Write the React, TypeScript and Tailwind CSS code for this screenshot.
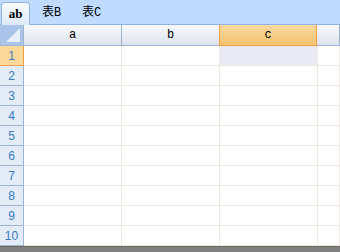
import React from 'react';

const COLS = ['a', 'b', 'c', ''];
const ROWS = [1, 2, 3, 4, 5, 6, 7, 8, 9, 10];
const SEL_ROW = 1;
const SEL_COL = 2;

export default function App() {
  return (
    <div className="w-[340px] h-[252px] overflow-hidden bg-white flex flex-col">
      {/* sheet tabs */}
      <div className="h-[25px] shrink-0 flex items-end bg-[#bfdbfd] border-b border-[#8fb3e3] pl-[1px]">
        <div className="[font-family:Liberation_Serif,serif] h-[23px] w-[29px] -mb-px flex items-center justify-center rounded-t-[4px] border border-b-0 border-[#8fb3e3] bg-gradient-to-b from-[#fbfdff] to-[#dde9f8] text-[13px] font-bold text-black">
          ab
        </div>
        <div className="[font-family:Liberation_Mono,Noto_Sans_CJK_SC,monospace] h-[23px] w-[41px] flex items-center justify-center text-[12px] text-black pl-[2px]">
          表B
        </div>
        <div className="[font-family:Liberation_Mono,Noto_Sans_CJK_SC,monospace] h-[23px] w-[41px] flex items-center justify-center text-[12px] text-black">
          表C
        </div>
      </div>

      {/* header row */}
      <div className="h-[21px] shrink-0 flex">
        <div className="w-[24px] shrink-0 bg-[#a9c4e8] border-r border-b border-[#9db5d1] relative">
          <div className="absolute right-[3px] bottom-[3px] w-0 h-0 border-l-[14px] border-l-transparent border-b-[14px] border-b-[#e9eff8]" />
        </div>
        {COLS.map((c, i) => (
          <div
            key={i}
            className={`[font-family:Liberation_Mono,monospace] shrink-0 ${i === 3 ? 'flex-1' : 'w-[98px]'} flex items-center justify-center text-[12px] text-black border-r border-b ${
              i === SEL_COL
                ? 'bg-gradient-to-b from-[#f9dba0] to-[#f3c36f] border-[#f2a14a] border-l border-l-[#f2a14a] -ml-px'
                : 'bg-gradient-to-b from-[#f7f9fc] to-[#dce3ed] border-[#9db5d1]'
            }`}
          >
            {c}
          </div>
        ))}
      </div>

      {/* body */}
      <div className="flex-1 flex flex-col">
        {ROWS.map((r) => (
          <div key={r} className="h-[20px] shrink-0 flex">
            <div
              className={`[font-family:Liberation_Sans,sans-serif] w-[24px] shrink-0 flex items-center justify-center text-[12px] text-[#3a7cc3] border-r border-b ${
                r === SEL_ROW
                  ? 'bg-[#fbd99b] border-[#f2a14a] border-t border-t-[#f2a14a] -mt-px h-[21px]'
                  : 'bg-[#e3ebf7] border-[#9db5d1]'
              }`}
            >
              {r}
            </div>
            {COLS.map((_, i) => (
              <div
                key={i}
                className={`shrink-0 ${i === 3 ? 'flex-1' : 'w-[98px]'} border-r border-b border-[#ebe9dd] ${
                  r === SEL_ROW && i === SEL_COL ? 'bg-[#e9eaf3]' : 'bg-white'
                }`}
              />
            ))}
          </div>
        ))}
        <div className="flex-1 bg-[#808080] border-t border-[#6b6b63]" />
      </div>
    </div>
  );
}
